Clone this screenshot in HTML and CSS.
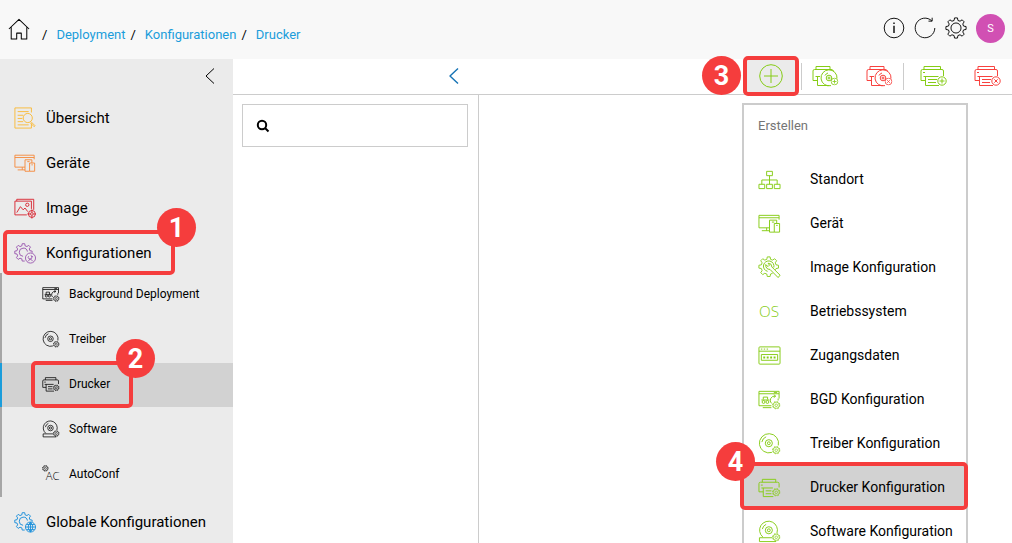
FILE: index.html
```
<!DOCTYPE html>
<html lang="de">
<head>
  <meta charset="UTF-8">
  <meta name="viewport" content="width=device-width, initial-scale=1.0">
  <title>Drucker</title>
  <link rel="stylesheet" href="styles.css">
</head>
<body>
  <!-- shared icon shapes -->
  <svg class="sprite" aria-hidden="true">
    <symbol id="gear" viewBox="0 0 24 24">
      <path d="M9.9 3.8L10.4 1H13.6L14.1 3.8L16.4 4.6L18.7 3.1L20.9 5.3L19.4 7.6L20.2 9.9L23 10.4V13.6L20.2 14.1L19.4 16.4L20.9 18.7L18.7 20.9L16.4 19.4L14.1 20.2L13.6 23H10.4L9.9 20.2L7.6 19.4L5.3 20.9L3.1 18.7L4.6 16.4L3.8 14.1L1 13.6V10.4L3.8 9.9L4.6 7.6L3.1 5.3L5.3 3.1L7.6 4.6Z"/>
      <circle cx="12" cy="12" r="5.5"/>
    </symbol>
    <symbol id="gear-open" viewBox="0 0 24 24">
      <path transform="translate(0 1) scale(.86)" stroke-width="1.2" d="M13.6 23H10.4L9.9 20.2L7.6 19.4L5.3 20.9L3.1 18.7L4.6 16.4L3.8 14.1L1 13.6V10.4L3.8 9.9L4.6 7.6L3.1 5.3L5.3 3.1L7.6 4.6L9.9 3.8L10.4 1H13.6L14.1 3.8L16.4 4.6L18.7 3.1L20.9 5.3L19.4 7.6L20.2 9.9L23 10.4V12.5M11.5 17A5.2 5.2 0 1 1 17 11"/>
    </symbol>
    <symbol id="mini-gear" viewBox="0 0 10 10">
      <circle cx="5" cy="5" r="4.3" stroke-dasharray="1.7 1.7" stroke-width="1"/>
      <circle cx="5" cy="5" r="3.6" stroke-width=".8"/>
      <circle cx="5" cy="5" r="1.5" stroke-width=".8"/>
    </symbol>
    <symbol id="devices" viewBox="0 0 24 24">
      <path d="M12 16.5H1V3.5H22V8M1 6H22M4 19.5H12M9 16.5V19.5"/>
      <path d="M17 21H12V8.5H19.5V12M17 12H22.5V21H17ZM14.5 10.5H17M19 14H20.5"/>
    </symbol>
    <symbol id="printer" viewBox="0 0 27 22">
      <path d="M4 4.5V1.5H20.5V4.5M5.5 15.5H1V6Q1 4.5 2.5 4.5H22Q23.5 4.5 23.5 6V11M3.5 11.5H18.5M5.5 11.5V20.5H19M8 14.5H17M8 17.5H16M3 7.5H5"/>
    </symbol>
    <symbol id="printer-disc" viewBox="0 0 27 22">
      <path d="M4 4.5V1.5H18V4.5M5.5 15.5H1V6Q1 4.5 2.5 4.5H19Q21 4.5 21.5 6M3.5 11.5H8M5.5 11.5V20.5H13"/>
      <path d="M19 20.6A8 8 0 1 1 25 13.5M10 20.5H17M13 10.5A5 5 0 0 1 16 8"/>
      <circle cx="17" cy="13" r="2.8"/>
      <circle cx="17" cy="13" r="1"/>
    </symbol>
    <symbol id="badge-plus" viewBox="0 0 10 10">
      <circle cx="5" cy="5" r="4.2"/><path d="M5 2.5V7.5M2.5 5H7.5"/>
    </symbol>
    <symbol id="badge-x" viewBox="0 0 10 10">
      <circle cx="5" cy="5" r="4.2"/><path d="M3.3 3.3L6.7 6.7M6.7 3.3L3.3 6.7"/>
    </symbol>
    <symbol id="printer-gear" viewBox="0 0 24 24">
      <path d="M4.5 6.5V3.5H18.5V6.5M5.5 16.5H1V8Q1 6.5 2.5 6.5H20.5Q22 6.5 22 8V12M3.5 12.5H15.5M5.5 12.5V21.5H16M8 15.5H14M8 18.5H14M3 9.5H5"/>
      <use href="#mini-gear" x="14.5" y="12.5" width="9" height="9"/>
    </symbol>
    <symbol id="disc-gear" viewBox="0 0 24 24">
      <path d="M14.5 21.3A10 10 0 1 1 21.2 14M4 10.5A7.5 7.5 0 0 1 8.5 5"/>
      <circle cx="11.3" cy="11.7" r="3.7"/>
      <circle cx="11.3" cy="11.7" r="1.5"/>
      <use href="#mini-gear" x="14.5" y="14.5" width="9" height="9"/>
    </symbol>
    <symbol id="software" viewBox="0 0 24 24">
      <path d="M5 17.7A9.3 9.3 0 1 1 19.8 13.5M4.5 9.5A7 7 0 0 1 8.5 4.5M15 18.5H1.5V22.5H19"/>
      <circle cx="11.3" cy="10.7" r="3.7"/>
      <circle cx="11.3" cy="10.7" r="1.5"/>
      <use href="#mini-gear" x="14.5" y="13.5" width="9" height="9"/>
    </symbol>
    <symbol id="deploy" viewBox="0 0 24 24">
      <path d="M14 18.5H1V3.5H22V11M1 6H22M5 20.5H14M16.5 4.8H20"/>
      <path d="M3.5 12.5H12M5.5 12V9.5H10V12"/>
      <circle cx="5.8" cy="14.6" r="1.5"/><circle cx="9.8" cy="14.6" r="1.5"/>
      <path d="M14 16A4.5 4.5 0 0 1 18 8.5M16.5 7L18.5 8.5L16.5 10M21 13V11"/>
      <use href="#mini-gear" x="14.5" y="13.5" width="9" height="9"/>
    </symbol>
  </svg>

  <header class="topbar">
    <nav aria-label="Pfad">
      <ol class="breadcrumb">
        <li><a href="#" aria-label="Start"><svg class="icon" viewBox="0 0 24 24"><path stroke-width="1.1" d="M1 12L12 1.5L23 12M3.5 10V23H9.5V16.5H14.5V23H20.5V10"/></svg></a></li>
        <li><a href="#">Deployment</a></li>
        <li><a href="#">Konfigurationen</a></li>
        <li><a href="#">Drucker</a></li>
      </ol>
    </nav>
    <div class="user-tools">
      <button type="button" aria-label="Info"><svg class="icon" viewBox="0 0 24 24"><circle cx="12" cy="12" r="10.7"/><path stroke-width="1.5" d="M12 9.5V17.5M12 6V7.6"/></svg></button>
      <button type="button" aria-label="Aktualisieren"><svg class="icon" viewBox="0 0 24 24"><path d="M22.7 12A10.7 10.7 0 1 1 19.5 4.3M15.8 4.5H19.8V.8"/></svg></button>
      <button type="button" aria-label="Einstellungen"><svg class="icon"><use href="#gear"/></svg></button>
      <button type="button" class="avatar">S</button>
    </div>
  </header>

  <div class="layout">
    <aside class="sidebar">
      <div class="collapse-row">
        <button type="button" aria-label="Menü einklappen"><svg class="chevron" viewBox="0 0 10 16"><path d="M9 .5L1 8L9 15.5"/></svg></button>
      </div>
      <nav aria-label="Hauptmenü">
        <a class="nav-item" href="#">
          <svg class="icon yellow" viewBox="0 0 24 24"><path d="M19 6V1H1V23H19V18M4 5H16M4 9H10M4 12.5H9M4 16H10M4 19.5H16M18.5 16L23 20.5L22 21.5L17.5 17"/><circle cx="15" cy="12" r="5"/></svg>
          Übersicht
        </a>
        <a class="nav-item" href="#">
          <svg class="icon orange"><use href="#devices"/></svg>
          Geräte
        </a>
        <a class="nav-item" href="#">
          <svg class="icon red" viewBox="0 0 24 24"><path d="M14 19.5H1V4.5H19V13M3 4.5V2.5H21.5V14M3 17L7 10.5L10 14L12 12L15 16"/><circle cx="14.5" cy="8.5" r="1.8"/><circle cx="19.5" cy="18.5" r="3.8"/><circle cx="19.5" cy="18.5" r="1.5"/><path d="M19.5 13.5V16.5M19.5 20.5V23.5M14.5 18.5H17.5M21.5 18.5H24"/></svg>
          Image
        </a>
        <a class="nav-item" href="#">
          <svg class="icon purple" viewBox="0 0 24 24"><use href="#gear-open"/><circle cx="18" cy="17.5" r="5.5"/><path d="M15.5 21L18 18M20.5 21L17.5 18M16 15.5A2 2 0 1 0 18.5 15L20.5 16"/></svg>
          Konfigurationen
          <span class="mark mark-config"><b>1</b></span>
        </a>
        <div class="submenu">
          <a href="#"><svg class="icon"><use href="#deploy"/></svg>Background Deployment</a>
          <a href="#"><svg class="icon"><use href="#disc-gear"/></svg>Treiber</a>
          <a href="#" class="active" aria-current="page"><svg class="icon"><use href="#printer-gear"/></svg>Drucker<span class="mark mark-printer"><b>2</b></span></a>
          <a href="#"><svg class="icon"><use href="#software"/></svg>Software</a>
          <a href="#"><svg class="icon" viewBox="0 0 24 24"><text class="glyph-text" x="5" y="20" font-size="15">AC</text><use href="#mini-gear" x="0" y="0" width="9" height="9"/></svg>AutoConf</a>
        </div>
        <a class="nav-item" href="#">
          <svg class="icon blue" viewBox="0 0 24 24"><use href="#gear-open"/><circle cx="18" cy="17.5" r="5.5"/><path d="M12.5 17.5H23.5M13.5 14.7H22.5M13.5 20.3H22.5M18 12V23M18 12Q13 17.5 18 23M18 12Q23 17.5 18 23"/></svg>
          Globale Konfigurationen
        </a>
      </nav>
    </aside>

    <main class="content">
      <div class="toolbar">
        <button type="button" class="panel-toggle" aria-label="Liste einklappen"><svg class="chevron" viewBox="0 0 10 16"><path stroke-width="1.4" d="M9 .5L1 8L9 15.5"/></svg></button>
        <div class="create">
          <button type="button" class="create-button" aria-label="Erstellen" aria-expanded="true"><svg class="icon green" viewBox="0 0 24 24"><circle cx="12" cy="12" r="11.3"/><path d="M12 5V19M5 12H19"/></svg></button>
          <span class="mark mark-create"><b>3</b></span>
          <div class="menu">
            <h2>Erstellen</h2>
            <button type="button"><svg class="icon" viewBox="0 0 24 24"><path d="M9 3.5H15V8H9ZM12 8V17M4 17V12.5H20V17M1 17H7V21.5H1ZM9 17H15V21.5H9ZM17 17H23V21.5H17Z"/></svg>Standort</button>
            <button type="button"><svg class="icon"><use href="#devices"/></svg>Gerät</button>
            <button type="button"><svg class="icon" viewBox="0 0 24 24"><path transform="scale(.93)" d="M16.4 19.4L14.1 20.2L13.6 23H10.4L9.9 20.2L7.6 19.4L5.3 20.9L3.1 18.7L4.6 16.4L3.8 14.1L1 13.6V10.4L3.8 9.9L4.6 7.6L3.1 5.3L5.3 3.1L7.6 4.6L9.9 3.8L10.4 1H13.6L14.1 3.8L16.4 4.6L18.7 3.1L20.9 5.3L19.4 7.6L20.2 9.9L23 10.4V13.6L20.2 14.1L19.5 15.5"/><path d="M10 16A5.5 5.5 0 1 1 16.5 12M8 9L10.5 11L12 9.5L10.5 7.5Q14.5 7.5 14.5 11.5L23 20L21 22.5L12.5 14Q8 14 8 9"/></svg>Image Konfiguration</button>
            <button type="button"><svg class="icon" viewBox="0 0 24 24"><text class="glyph-text" x="1" y="18" font-size="16">OS</text></svg>Betriebssystem</button>
            <button type="button"><svg class="icon" viewBox="0 0 24 24"><rect x="1" y="3" width="22" height="18" rx="1"/><path d="M1 7.5H23M3 5.3H4.5M6 5.3H7.5M9 5.3H10.5"/><rect x="3.5" y="11" width="17" height="6"/><path stroke-width="2" stroke-dasharray="2 1.6" d="M5.5 14H18.5"/></svg>Zugangsdaten</button>
            <button type="button"><svg class="icon"><use href="#deploy"/></svg>BGD Konfiguration</button>
            <button type="button"><svg class="icon"><use href="#disc-gear"/></svg>Treiber Konfiguration</button>
            <button type="button" class="active"><svg class="icon"><use href="#printer-gear"/></svg>Drucker Konfiguration<span class="mark mark-menu"><b>4</b></span></button>
            <button type="button"><svg class="icon"><use href="#software"/></svg>Software Konfiguration</button>
          </div>
        </div>
        <div class="tool-group green">
          <button type="button" aria-label="Treiber hinzufügen"><svg class="icon" viewBox="0 0 27 22"><use href="#printer-disc" width="27" height="22"/><use href="#badge-plus" x="18.5" y="12.5" width="8" height="8"/></svg></button>
          <button type="button" class="red-tool" aria-label="Treiber entfernen"><svg class="icon" viewBox="0 0 27 22"><use href="#printer-disc" width="27" height="22"/><use href="#badge-x" x="18.5" y="12.5" width="8" height="8"/></svg></button>
        </div>
        <div class="tool-group green last">
          <button type="button" aria-label="Drucker hinzufügen"><svg class="icon" viewBox="0 0 27 22"><use href="#printer" width="27" height="22"/><use href="#badge-plus" x="17" y="11" width="10" height="10"/></svg></button>
          <button type="button" class="red-tool" aria-label="Drucker entfernen"><svg class="icon" viewBox="0 0 27 22"><use href="#printer" width="27" height="22"/><use href="#badge-x" x="17" y="11" width="10" height="10"/></svg></button>
        </div>
      </div>
      <section class="list-panel">
        <label class="search">
          <svg viewBox="0 0 14 14" aria-hidden="true"><circle cx="6" cy="6" r="4.2"/><path d="M9 9L12.5 12.5"/></svg>
          <input type="search" aria-label="Suche">
        </label>
      </section>
    </main>
  </div>
</body>
</html>
```
FILE: styles.css
```
* {
  box-sizing: border-box;
}
body {
  margin: 0;
  height: 100vh;
  overflow: hidden;
  display: flex;
  flex-direction: column;
  background: #fff;
  color: #000;
  font-family: Roboto, sans-serif;
  font-size: 15px;
}
a {
  color: inherit;
  text-decoration: none;
}
button {
  border: 0;
  padding: 0;
  background: none;
  color: inherit;
  font: inherit;
  cursor: pointer;
}
svg {
  display: block;
  fill: none;
  stroke: currentColor;
  stroke-width: 1;
  stroke-linejoin: round;
}
.sprite {
  display: none;
}
.icon {
  width: 22px;
  height: 22px;
  flex: none;
  overflow: visible;
}
.glyph-text {
  fill: currentColor;
  stroke: none;
  font-family: "Open Sans", sans-serif;
  font-weight: 300;
}
.chevron {
  width: 10px;
  height: 16px;
}
.yellow { color: #f9b934; }
.orange { color: #f58a3c; }
.red { color: #d8232f; }
.purple { color: #9b59b0; }
.blue { color: #1a8fdb; }
.green { color: #86cc16; }
.red-tool { color: #f8423f; }

/* top bar */
.topbar {
  height: 59px;
  flex: none;
  display: flex;
  justify-content: space-between;
  padding: 0 7px 3px 8px;
  background: #f8f8f8;
}
.breadcrumb {
  display: flex;
  align-items: flex-end;
  margin: 0;
  padding: 18px 0 0;
  list-style: none;
  font-size: 13px;
  line-height: 15px;
}
.breadcrumb li + li::before {
  content: "/";
  margin: 0 9px 0 5px;
}
.breadcrumb li:first-child {
  margin-right: 7px;
  padding-bottom: 2px;
}
.breadcrumb li + li a {
  color: #1b9ddb;
}
.user-tools {
  display: flex;
  align-items: center;
  gap: 9px;
}
.avatar {
  width: 29px;
  height: 29px;
  border-radius: 50%;
  background: #d150b3;
  color: #fff;
  font-size: 11px;
}

.layout {
  flex: 1;
  min-height: 0;
  display: flex;
}

/* sidebar */
.sidebar {
  width: 233px;
  flex: none;
  background: #ebebeb;
}
.collapse-row {
  height: 34px;
  display: flex;
  justify-content: flex-end;
  align-items: center;
  padding-right: 18px;
}
.nav-item {
  position: relative;
  height: 45px;
  display: flex;
  align-items: center;
  gap: 10px;
  padding: 4px 0 0 14px;
}
.submenu {
  display: flex;
  flex-direction: column;
  gap: 1px;
  background: linear-gradient(to right, #a6a6a6 2px, transparent 2px);
  font-size: 12px;
}
.submenu a {
  position: relative;
  height: 44px;
  display: flex;
  align-items: center;
  gap: 9px;
  padding: 0 0 2px 42px;
}
.submenu .icon {
  width: 18px;
  height: 18px;
}
.submenu .active {
  background: #d2d2d2;
  box-shadow: inset 2px 0 #1b9ddb;
}

/* content */
.content {
  flex: 1;
  min-width: 0;
  display: flex;
  flex-direction: column;
}
.toolbar {
  height: 36px;
  flex: none;
  display: flex;
  align-items: center;
  border-bottom: 1px solid #ccc;
}
.panel-toggle {
  margin: 0 auto 0 216px;
  padding-bottom: 2px;
  color: #1673b5;
}
.create {
  position: relative;
  height: 35px;
  margin-right: 3px;
}
.create-button {
  width: 54px;
  height: 35px;
  display: grid;
  place-items: center;
  padding-bottom: 2px;
  background: #ebebeb;
}
.create-button .icon {
  width: 24px;
  height: 24px;
}
.tool-group {
  height: 27px;
  display: flex;
  gap: 8px;
  border-left: 1px solid #ccc;
}
.tool-group.last {
  padding: 0 2px 0 6px;
  margin-left: 1px;
}
.tool-group button {
  width: 46px;
  display: grid;
  place-items: center;
  padding-bottom: 2px;
}
.tool-group .icon {
  width: 27px;
}
.list-panel {
  flex: 1;
  width: 246px;
  padding: 9px 10px 0 9px;
  border-right: 1px solid #ccc;
}
.search {
  height: 43px;
  display: flex;
  align-items: center;
  gap: 8px;
  padding: 0 13px;
  border: 1px solid #ccc;
}
.search svg {
  width: 14px;
  height: 14px;
  flex: none;
  stroke-width: 2;
}
.search input {
  flex: 1;
  min-width: 0;
  border: 0;
  outline: 0;
  font: inherit;
}

/* create menu */
.menu {
  position: absolute;
  top: 44px;
  left: -2px;
  width: 226px;
  border: 2px solid #ccc;
  background: #fff;
  font-size: 14px;
}
.menu h2 {
  margin: 0;
  padding: 13px 14px 23px;
  color: #757575;
  font-size: 13px;
  font-weight: 400;
  line-height: 16px;
}
.menu button {
  position: relative;
  width: 100%;
  height: 44px;
  display: flex;
  align-items: center;
  gap: 29px;
  padding-left: 14px;
  white-space: nowrap;
}
.menu .icon {
  width: 23px;
  height: 23px;
  color: #86cc16;
}
.menu .active {
  background: #d2d2d2;
}

/* numbered step markers */
.mark {
  position: absolute;
  border: 4px solid #f53d3d;
  border-radius: 5px;
  pointer-events: none;
}
.mark b {
  position: absolute;
  width: 39px;
  height: 39px;
  border-radius: 50%;
  background: #f53d3d;
  color: #fff;
  font-size: 27px;
  font-weight: 700;
  line-height: 40px;
  text-align: center;
}
.mark-config {
  top: 2px;
  left: 3px;
  width: 172px;
  height: 45px;
}
.mark-config b {
  top: -26px;
  right: -25px;
}
.mark-printer {
  top: -2px;
  left: 31px;
  width: 102px;
  height: 47px;
}
.mark-printer b {
  top: -26px;
  right: -26px;
}
.mark-create {
  top: -3px;
  left: -1px;
  width: 56px;
  height: 40px;
}
.mark-create b {
  top: -4px;
  left: -45px;
}
.mark-menu {
  top: -3px;
  left: -4px;
  right: -2px;
  height: 48px;
}
.mark-menu b {
  top: -24px;
  left: -28px;
}
```
